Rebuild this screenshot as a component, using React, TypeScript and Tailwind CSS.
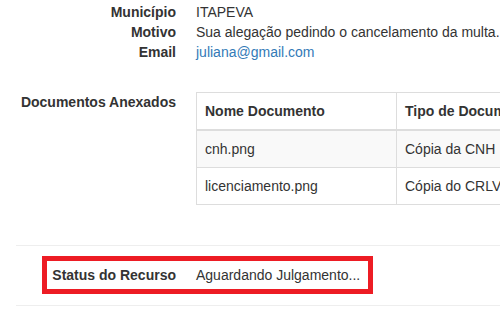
const info = [
  { label: "Município", value: "ITAPEVA" },
  { label: "Motivo", value: "Sua alegação pedindo o cancelamento da multa." },
  { label: "Email", value: "juliana@gmail.com", link: true },
];

const docs = [
  { nome: "cnh.png", tipo: "Cópia da CNH" },
  { nome: "licenciamento.png", tipo: "Cópia do CRLV" },
];

export default function App() {
  return (
    <div className="w-[500px] h-[319px] overflow-hidden bg-white text-[14px] leading-[20px] text-[#333] font-['Liberation_Sans',Arial,sans-serif]">
      <div className="pl-[16px] pt-[2px]">
        {/* Dados do recurso */}
        <dl>
          {info.map((row) => (
            <div key={row.label} className="flex">
              <dt className="w-[160px] shrink-0 text-right font-bold">{row.label}</dt>
              <dd className="ml-[20px] whitespace-nowrap">
                {row.link ? (
                  <a href="#" className="text-[#337ab7]">{row.value}</a>
                ) : (
                  row.value
                )}
              </dd>
            </div>
          ))}
        </dl>

        {/* Documentos */}
        <div className="flex mt-[30px]">
          <div className="w-[160px] shrink-0 text-right font-bold">Documentos Anexados</div>
          <div className="ml-[20px] shrink-0">
            <table className="w-[600px] border-collapse border border-[#ddd]">
              <thead>
                <tr>
                  <th className="w-[200px] text-left p-[8px] border border-[#ddd] border-b-2">Nome Documento</th>
                  <th className="text-left p-[8px] border border-[#ddd] border-b-2 whitespace-nowrap">Tipo de Documento</th>
                </tr>
              </thead>
              <tbody>
                {docs.map((d, i) => (
                  <tr key={d.nome} className={i % 2 === 0 ? "bg-[#f9f9f9]" : ""}>
                    <td className="p-[8px] border border-[#ddd]">{d.nome}</td>
                    <td className="p-[8px] border border-[#ddd] whitespace-nowrap">{d.tipo}</td>
                  </tr>
                ))}
              </tbody>
            </table>
          </div>
        </div>

        <hr className="mt-[40px] border-0 border-t border-[#eee]" />

        {/* Status */}
        <div className="mt-[10px] ml-[26px] w-[331px] border-[5px] border-[#ed1c24] py-[4px] flex">
          <div className="w-[129px] shrink-0 text-right font-bold">Status do Recurso</div>
          <div className="ml-[20px] whitespace-nowrap">Aguardando Julgamento...</div>
        </div>

        <hr className="mt-[11px] border-0 border-t border-[#eee]" />
      </div>
    </div>
  );
}
